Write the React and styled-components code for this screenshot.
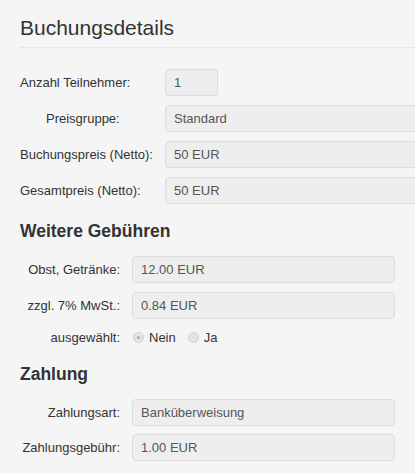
import React from "react";
import styled, { createGlobalStyle } from "styled-components";

const GlobalStyle = createGlobalStyle`
  html, body {
    margin: 0;
    padding: 0;
    background: #f5f5f5;
    overflow: hidden;
  }
  body {
    font-family: "Liberation Sans", Arial, sans-serif;
    font-size: 13px;
    color: #333;
  }
`;

const Page = styled.div`
  padding-left: 19px;
  width: 396px;
`;

const Title = styled.h3`
  margin: 16px 0 0;
  padding: 0 0 8px 1px;
  font-size: 21px;
  line-height: 23px;
  font-weight: normal;
  color: #333;
  border-bottom: 1px solid #e5e5e5;
`;

const Heading = styled.h4`
  margin: ${(p) => p.$top}px 0 0 1px;
  font-size: 17.5px;
  line-height: 20px;
  font-weight: bold;
  color: #333;
`;

const Form = styled.div`
  display: flex;
  flex-direction: column;
  gap: ${(p) => p.$gap || 9}px;
  margin-top: ${(p) => p.$top}px;
  padding-left: 1px;
`;

const Row = styled.div`
  display: flex;
  align-items: center;
  gap: ${(p) => (p.$wide ? 0 : 12)}px;
  height: ${(p) => (p.$short ? 18 : 27)}px;
`;

const Label = styled.label`
  flex: none;
  width: ${(p) => (p.$wide ? 145 : 100)}px;
  padding-left: ${(p) => p.$indent || 0}px;
  box-sizing: border-box;
  text-align: ${(p) => (p.$wide ? "left" : "right")};
  white-space: nowrap;
`;

const Field = styled.div`
  flex: none;
  box-sizing: border-box;
  width: ${(p) => p.$w}px;
  height: 27px;
  padding: 0 8px;
  display: flex;
  align-items: center;
  background: #eeeeee;
  border: 1px solid #dcdcdc;
  border-radius: 4px;
  color: #555;
  white-space: nowrap;
`;

const Radios = styled.div`
  display: flex;
  align-items: center;
  padding-left: 1px;
`;

const RadioDot = styled.span`
  box-sizing: border-box;
  width: 11px;
  height: 11px;
  border-radius: 50%;
  border: 1px solid #d0d0d0;
  background: #e4e4e4;
  margin-right: 5px;
  display: flex;
  align-items: center;
  justify-content: center;
  &::after {
    content: "";
    display: ${(p) => (p.$checked ? "block" : "none")};
    width: 3px;
    height: 3px;
    border-radius: 50%;
    background: #a8a8a8;
  }
`;

const RadioText = styled.span`
  margin-right: 12px;
`;

function Input({ label, value, w, wide, indent }) {
  return (
    <Row $wide={wide}>
      <Label $wide={wide} $indent={indent}>
        {label}
      </Label>
      <Field $w={w}>{value}</Field>
    </Row>
  );
}

const App = () => {
  return (
    <Page>
      <GlobalStyle />
      <Title>Buchungsdetails</Title>

      <Form $top={21}>
        <Input wide label="Anzahl Teilnehmer:" value="1" w={53} />
        <Input wide indent={26} label="Preisgruppe:" value="Standard" w={260} />
        <Input wide label="Buchungspreis (Netto):" value="50 EUR" w={260} />
        <Input wide label="Gesamtpreis (Netto):" value="50 EUR" w={260} />
      </Form>

      <Heading $top={17}>Weitere Gebühren</Heading>
      <Form $top={15}>
        <Input label="Obst, Getränke:" value="12.00 EUR" w={263} />
        <Input label="zzgl. 7% MwSt.:" value="0.84 EUR" w={263} />
        <Row $short>
          <Label>ausgewählt:</Label>
          <Radios>
            <RadioDot $checked />
            <RadioText>Nein</RadioText>
            <RadioDot />
            <RadioText>Ja</RadioText>
          </Radios>
        </Row>
      </Form>

      <Heading $top={18}>Zahlung</Heading>
      <Form $top={15} $gap={8}>
        <Input label="Zahlungsart:" value="Banküberweisung" w={263} />
        <Input label="Zahlungsgebühr:" value="1.00 EUR" w={263} />
      </Form>
    </Page>
  );
};

export default App;
